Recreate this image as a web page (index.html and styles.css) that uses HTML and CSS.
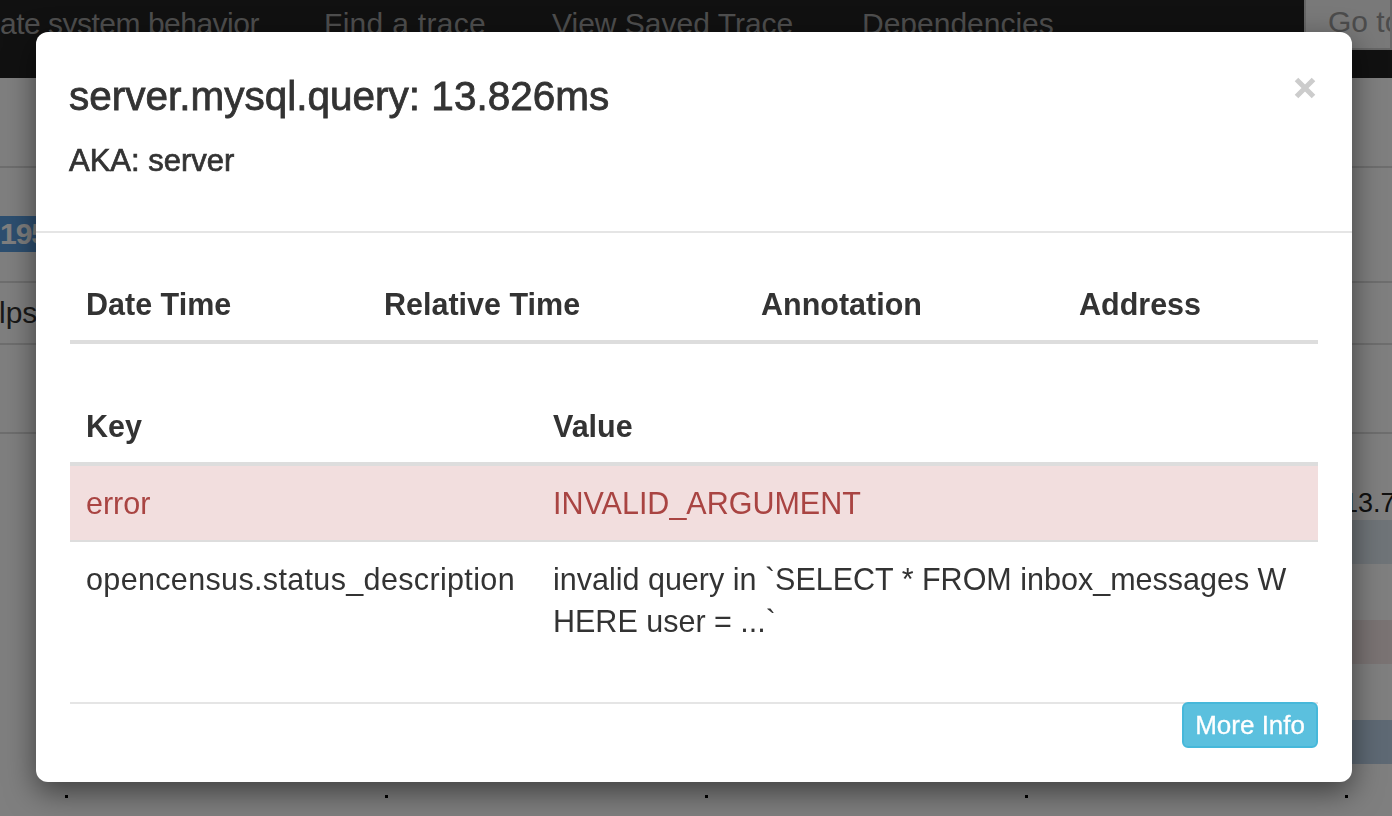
FILE: index.html
```html
<!DOCTYPE html>
<html>
<head>
<meta charset="utf-8">
<title>Span details</title>
<link rel="stylesheet" href="styles.css">
</head>
<body>
<div class="page">
  <nav class="navbar">
    <div class="nav-links">
      <span class="nav-link nl-1">ate system behavior</span>
      <span class="nav-link nl-2">Find a trace</span>
      <span class="nav-link nl-3">View Saved Trace</span>
      <span class="nav-link">Dependencies</span>
    </div>
    <div class="goto">Go to trace</div>
  </nav>
  <div class="subheader"></div>
  <div class="summary"><span class="badge">195</span></div>
  <div class="toolbar"><span class="toolbar-btn">lpse</span></div>
  <div class="spacer"></div>
  <div class="trace">
    <div class="trace-label">13.7</div>
    <div class="band band-blue"></div>
    <div class="band-gap"></div>
    <div class="band band-red"></div>
    <div class="band-gap"></div>
    <div class="band band-slate"></div>
    <div class="ticks"><i></i><i></i><i></i><i></i><i></i></div>
  </div>
</div>
<div class="backdrop"></div>
<div class="modal">
  <div class="modal-header">
    <div class="modal-titles">
      <h4 class="modal-title">server.mysql.query: 13.826ms</h4>
      <h5 class="modal-aka">AKA: server</h5>
    </div>
    <button class="close" aria-label="Close">
      <svg width="24" height="22" viewBox="0 0 24 22"><path d="M3.5 2.5 L20.5 19.5 M20.5 2.5 L3.5 19.5" stroke="#cccccc" stroke-width="5"/></svg>
    </button>
  </div>
  <div class="modal-body">
    <table class="table table-annotations">
      <thead>
        <tr>
          <th class="c-date">Date Time</th>
          <th class="c-rel">Relative Time</th>
          <th class="c-ann">Annotation</th>
          <th>Address</th>
        </tr>
      </thead>
      <tbody></tbody>
    </table>
    <table class="table table-tags">
      <thead>
        <tr>
          <th class="c-key">Key</th>
          <th>Value</th>
        </tr>
      </thead>
      <tbody>
        <tr class="danger">
          <td>error</td>
          <td>INVALID_ARGUMENT</td>
        </tr>
        <tr class="bordered">
          <td class="key-text">opencensus.status_description</td>
          <td class="value-wrap">invalid query in `SELECT * FROM inbox_messages WHERE user = ...`</td>
        </tr>
      </tbody>
    </table>
  </div>
  <div class="modal-footer">
    <div class="footer-bar">
      <button class="btn-info">More Info</button>
    </div>
  </div>
</div>
</body>
</html>
```
FILE: styles.css
```css
* { box-sizing: border-box; }
html, body {
  margin: 0;
  padding: 0;
  width: 1392px;
  height: 816px;
  overflow: hidden;
  background: #ffffff;
  font-family: "Liberation Sans", Arial, sans-serif;
  color: #333333;
}

/* ---------- background page ---------- */
.page { width: 1392px; height: 816px; }
.navbar {
  height: 78px;
  background: #222222;
  display: flex;
  align-items: flex-start;
}
.nav-links {
  display: flex;
  padding-top: 9px;
  font-size: 30px;
  line-height: 30px;
  color: #9d9d9d;
  white-space: nowrap;
  overflow: hidden;
}
.nl-1 { width: 324px; letter-spacing: -0.5px; }
.nl-2 { width: 228px; letter-spacing: 0.3px; }
.nl-3 { width: 310px; }
.goto {
  margin-left: auto;
  width: 88px;
  height: 50px;
  background: #f2f2f2;
  border: 2px solid #cccccc;
  border-top: 0;
  padding: 7px 0 0 22px;
  font-size: 30px;
  line-height: 30px;
  color: #999999;
  white-space: nowrap;
  overflow: hidden;
}
.subheader {
  height: 90px;
  border-bottom: 2px solid #dddddd;
}
.summary {
  height: 115px;
  padding-top: 48px;
  border-bottom: 2px solid #dddddd;
}
.badge {
  display: inline-block;
  height: 36px;
  padding: 0 40px 0 0;
  background: #5a9ee0;
  color: #ffffff;
  font-weight: bold;
  font-size: 30px;
  line-height: 36px;
  letter-spacing: -1px;
}
.toolbar {
  height: 62px;
  border-bottom: 2px solid #dddddd;
  font-size: 30px;
  line-height: 60px;
  color: #333333;
  overflow: hidden;
  white-space: nowrap;
}
.toolbar-btn {
  display: inline-block;
  margin-left: -1px;
}
.spacer {
  height: 89px;
  border-bottom: 2px solid #dddddd;
}
.trace { overflow: hidden; }
.trace-label {
  font-size: 27px;
  line-height: 34px;
  padding: 52px 0 0 1343px;
  white-space: nowrap;
  color: #222222;
}
.band { height: 44px; margin-left: 300px; }
.band-gap { height: 56px; }
.band-blue { background: #dfe8f1; }
.band-red { background: #f5e6e6; }
.band-slate { background: #bcd3e9; }
.ticks {
  display: flex;
  gap: 317px;
  padding: 31px 0 0 65px;
}
.ticks i {
  display: block;
  width: 3px;
  height: 3px;
  background: #000000;
}

.backdrop {
  position: fixed;
  inset: 0;
  background: rgba(0, 0, 0, 0.5);
}

/* ---------- modal ---------- */
.modal {
  position: absolute;
  left: 36px;
  top: 32px;
  width: 1316px;
  height: 750px;
  background: #ffffff;
  border-radius: 12px;
  box-shadow: 0 10px 30px rgba(0, 0, 0, 0.5);
}
.modal-header {
  height: 201px;
  padding: 42px 35px 0 33px;
  border-bottom: 2px solid #e5e5e5;
  display: flex;
  justify-content: space-between;
  align-items: flex-start;
}
.modal-title {
  margin: 0;
  font-size: 40.5px;
  line-height: 44px;
  font-weight: normal;
  color: #333333;
  -webkit-text-stroke: 0.8px #333333;
}
.modal-aka {
  margin: 26px 0 0 0;
  font-size: 31px;
  line-height: 34px;
  font-weight: normal;
  color: #333333;
  -webkit-text-stroke: 0.7px #333333;
}
.close {
  margin: 3px 0 0 0;
  padding: 0;
  border: 0;
  background: transparent;
  width: 24px;
  height: 22px;
  display: block;
}
.close svg { display: block; }

.modal-body {
  padding: 35px 34px 0 34px;
}
.table {
  width: 100%;
  border-collapse: separate;
  border-spacing: 0;
  font-size: 30.5px;
  table-layout: fixed;
}
.table th {
  text-align: left;
  font-weight: bold;
  padding: 16px;
  line-height: 40px;
  border-bottom: 4px solid #dddddd;
  color: #333333;
}
.table td {
  padding: 16px;
  line-height: 42px;
  vertical-align: top;
}
.table-annotations { margin-bottom: 46px; }
.table-tags { margin-bottom: 44px; }
.c-date { width: 298px; }
.c-rel { width: 377px; }
.c-ann { width: 318px; }
.c-key { width: 467px; }
.key-text { letter-spacing: 0.35px; }
.danger td {
  background: #f2dede;
  color: #a94442;
}
.bordered td { border-top: 2px solid #dddddd; }
.value-wrap { word-break: break-all; }

.modal-footer {
  padding: 0 34px;
}
.footer-bar {
  border-top: 2px solid #e5e5e5;
  display: flex;
  justify-content: flex-end;
}
.btn-info {
  margin-top: -2px;
  height: 46px;
  padding: 0 11px;
  background: #5bc0de;
  border: 2px solid #46b8da;
  border-radius: 6px;
  color: #ffffff;
  font-family: "Liberation Sans", Arial, sans-serif;
  font-size: 26px;
  line-height: 40px;
  -webkit-text-stroke: 0.3px #ffffff;
}
```
